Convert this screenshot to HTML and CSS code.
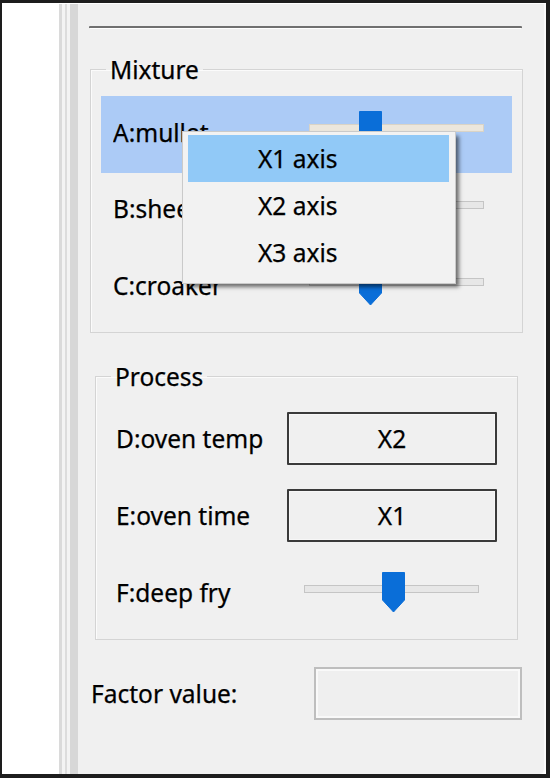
FILE: index.html
```html
<!DOCTYPE html>
<html>
<head>
<meta charset="utf-8">
<title>Factor axes</title>
<link rel="stylesheet" href="styles.css">
</head>
<body>
<div class="frame">
  <div class="window">
    <div class="gutter"></div>
    <div class="stripes"></div>
    <div class="panel">
      <div class="separator"></div>

      <fieldset class="group group-mixture">
        <legend>Mixture</legend>
        <div class="row row-mix row-selected">
          <span class="label label-mix">A:mullet</span>
          <div class="slider">
            <div class="track"></div>
            <svg class="thumb" style="left:49px" width="25" height="41" viewBox="0 0 25 41"><path d="M1.5 0.5 H23.5 V28 L12.5 40 L1.5 28 Z"/></svg>
          </div>
        </div>
        <div class="row row-mix">
          <span class="label label-mix">B:sheepshead</span>
          <div class="slider">
            <div class="track"></div>
            <svg class="thumb" style="left:49px" width="25" height="41" viewBox="0 0 25 41"><path d="M1.5 0.5 H23.5 V28 L12.5 40 L1.5 28 Z"/></svg>
          </div>
        </div>
        <div class="row row-mix">
          <span class="label label-mix">C:croaker</span>
          <div class="slider">
            <div class="track"></div>
            <svg class="thumb" style="left:49px" width="25" height="41" viewBox="0 0 25 41"><path d="M1.5 0.5 H23.5 V28 L12.5 40 L1.5 28 Z"/></svg>
          </div>
        </div>
      </fieldset>

      <fieldset class="group group-process">
        <legend>Process</legend>
        <div class="row row-proc">
          <span class="label label-proc">D:oven temp</span>
          <div class="axis-btn">X2</div>
        </div>
        <div class="row row-proc">
          <span class="label label-proc">E:oven time</span>
          <div class="axis-btn">X1</div>
        </div>
        <div class="row row-proc">
          <span class="label label-fry">F:deep fry</span>
          <div class="slider">
            <div class="track"></div>
            <svg class="thumb" style="left:77px" width="25" height="41" viewBox="0 0 25 41"><path d="M1.5 0.5 H23.5 V28 L12.5 40 L1.5 28 Z"/></svg>
          </div>
        </div>
      </fieldset>

      <div class="factor-row">
        <span class="factor-label">Factor value:</span>
        <div class="factor-box"></div>
      </div>

      <div class="menu">
        <div class="menu-item menu-item-active">X1 axis</div>
        <div class="menu-item">X2 axis</div>
        <div class="menu-item">X3 axis</div>
      </div>
    </div>
  </div>
</div>
</body>
</html>
```

FILE: styles.css
```css
html, body {
  margin: 0;
  padding: 0;
}

body {
  width: 550px;
  height: 778px;
  overflow: hidden;
  background: #1d1d1d;
  font-family: "Noto Sans", "Open Sans", sans-serif;
  font-size: 24.5px;
  color: #000;
  -webkit-text-stroke: 0.25px #000;
}

.frame {
  box-sizing: border-box;
  height: 778px;
  padding: 3px 4px 4px 2px;
  background: #1d1d1d;
}

.window {
  display: flex;
  height: 100%;
  background: #ffffff;
}

.gutter {
  flex: 0 0 57px;
  background: #ffffff;
}

.stripes {
  flex: 0 0 19px;
  margin-top: 1px;
  background: linear-gradient(to right,
    #dadada 0 3px,
    #f3f3f3 3px 6px,
    #dcdcdc 6px 8px,
    #f3f3f3 8px 11px,
    #d7d7d7 11px 19px);
}

.panel {
  position: relative;
  flex: 1 1 auto;
  margin-top: 1px;
  box-sizing: border-box;
  background: #f0f0f0;
  border-right: 2px solid #fafafa;
  border-bottom-right-radius: 6px;
}

.separator {
  height: 2px;
  margin: 22px 22px 0 11px;
  background: #707070;
  border-bottom: 1px solid #ffffff;
  border-radius: 1px;
}

.group {
  margin: 0;
  padding: 15px 10px 5px;
  min-width: 0;
  border: 1px solid #d4d4d4;
  box-shadow: inset 1px 1px 0 #fbfbfb;
}

.group legend {
  margin-left: 5px;
  padding: 0 4px;
  line-height: 23px;
}

.group-mixture {
  margin: 29px 21px 0 12px;
}

.group-process {
  margin: 32px 26px 0 17px;
}

.row {
  box-sizing: border-box;
  height: 77px;
  padding-bottom: 6px;
  display: flex;
  align-items: center;
}

.row-mix {
  padding-left: 12px;
}

.row-proc {
  padding-left: 10px;
}

.row-selected {
  background: #accbf6;
  padding-bottom: 4px;
}

.label {
  flex: 0 0 auto;
  white-space: nowrap;
  overflow: hidden;
}

.label-mix {
  width: 196px;
}

.label-proc {
  width: 171px;
}

.label-fry {
  width: 188px;
}

.slider {
  position: relative;
  flex: 0 0 175px;
  height: 41px;
}

.row-selected .slider {
  margin-top: -2px;
}

.track {
  box-sizing: border-box;
  height: 8px;
  margin-top: 13px;
  border: 1px solid #c5c5c5;
  background: #e7e7e7;
}

.row-selected .track {
  border-color: #d9d3c6;
  background: #ebe6dc;
}

.thumb {
  position: absolute;
  top: 0;
  display: block;
}

.thumb path {
  fill: #0a6ed8;
  stroke: #0a6ed8;
  stroke-width: 1;
  stroke-linejoin: round;
}

.axis-btn {
  box-sizing: border-box;
  flex: 0 0 210px;
  height: 53px;
  display: flex;
  align-items: center;
  justify-content: center;
  border: 2px solid #3a3a3a;
  border-radius: 1px;
  background: #f0f0f0;
  box-shadow: inset 0 0 0 1px #f7f7f7;
}

.factor-row {
  display: flex;
  align-items: center;
  height: 53px;
  margin-top: 27px;
  padding-left: 13px;
}

.factor-label {
  flex: 0 0 223px;
  white-space: nowrap;
}

.factor-box {
  box-sizing: border-box;
  flex: 0 0 208px;
  height: 53px;
  border: 2px solid #bebebe;
  background: #efefef;
  box-shadow: inset 0 0 0 2px #f9f9f9;
}

.menu {
  position: absolute;
  left: 104px;
  top: 127px;
  box-sizing: border-box;
  width: 274px;
  padding: 3px 6px 7px 5px;
  border: 1px solid #cacaca;
  background: #f2f2f2;
  box-shadow: 4px 4px 4px -1px rgba(0, 0, 0, 0.55);
}

.menu-item {
  height: 47px;
  line-height: 47px;
  padding-left: 70px;
  white-space: nowrap;
}

.menu-item-active {
  background: #91c9f7;
}
```
